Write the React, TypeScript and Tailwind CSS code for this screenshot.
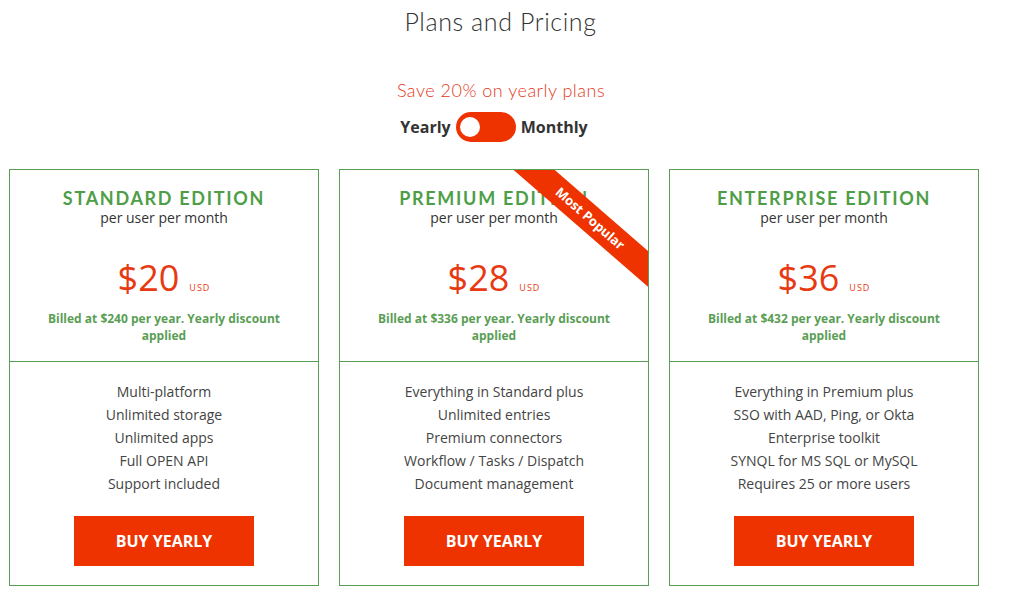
import React from "react";

type Plan = {
  name: string;
  price: number;
  billed: number;
  features: string[];
  popular?: boolean;
};

const plans: Plan[] = [
  {
    name: "Standard Edition",
    price: 20,
    billed: 240,
    features: ["Multi-platform", "Unlimited storage", "Unlimited apps", "Full OPEN API", "Support included"],
  },
  {
    name: "Premium Edition",
    price: 28,
    billed: 336,
    popular: true,
    features: [
      "Everything in Standard plus",
      "Unlimited entries",
      "Premium connectors",
      "Workflow / Tasks / Dispatch",
      "Document management",
    ],
  },
  {
    name: "Enterprise Edition",
    price: 36,
    billed: 432,
    features: [
      "Everything in Premium plus",
      "SSO with AAD, Ping, or Okta",
      "Enterprise toolkit",
      "SYNQL for MS SQL or MySQL",
      "Requires 25 or more users",
    ],
  },
];

function PlanCard({ plan }: { plan: Plan }) {
  return (
    <div className="relative overflow-hidden border border-[#5a9e55] bg-white">
      {plan.popular && (
        <div className="absolute left-[150px] top-[35px] flex h-[27px] w-[200px] rotate-[41deg] items-center justify-center bg-[#ee3300] text-[13px] font-bold text-white">
          Most Popular
        </div>
      )}
      <div className="flex flex-col items-center border-b border-[#5a9e55] pt-[18px] pb-[17px] text-center">
        <h2 className="font-['Lato',sans-serif] text-[18px] leading-[20px] font-bold tracking-[1.7px] text-[#4e9e48] uppercase">
          {plan.name}
        </h2>
        <p className="text-[14px] leading-[20px] text-[#333]">per user per month</p>
        <div className="mt-[28px] flex items-baseline gap-[10px]">
          <span className="text-[36px] leading-[44px] font-medium text-[#e83a12]">${plan.price}</span>
          <span className="text-[9px] tracking-[1px] text-[#e83a12]">USD</span>
        </div>
        <p className="mt-[10px] text-[12px] leading-[17px] font-bold text-[#5a9e55]">
          Billed at ${plan.billed} per year. Yearly discount
          <br />
          applied
        </p>
      </div>
      <div className="flex flex-col items-center pt-[18px] pb-[19px] text-center">
        <ul className="text-[14px] leading-[23px] text-[#444]">
          {plan.features.map((f) => (
            <li key={f}>{f}</li>
          ))}
        </ul>
        <button className="mt-[21px] h-[50px] w-[180px] bg-[#ee3300] text-[16px] font-bold text-white">
          BUY YEARLY
        </button>
      </div>
    </div>
  );
}

export default function App() {
  return (
    <div className="min-h-[611px] w-[1010px] bg-white font-['Open_Sans',sans-serif] text-[#333]">
      <h1 className="pt-[5px] pr-[9px] text-center font-['Lato',sans-serif] text-[25px] leading-[32px] font-light tracking-[0.6px] text-[#333]">
        Plans and Pricing
      </h1>
      <p className="mt-[40px] pr-[8px] text-center font-['Lato',sans-serif] text-[18px] leading-[26px] font-light tracking-[0.5px] text-[#e4381a]">
        Save 20% on yearly plans
      </p>
      <div className="ml-[9px] w-[970px]">
        <div className="mt-[9px] flex items-center justify-center gap-[5px] text-[16px] font-bold text-[#333]">
          <span>Yearly</span>
          <div className="flex h-[30px] w-[60px] items-center rounded-full bg-[#ee3300] px-[4px]">
            <div className="h-[20px] w-[20px] rounded-full bg-white" />
          </div>
          <span>Monthly</span>
        </div>
        <div className="mt-[27px] grid grid-cols-3 gap-[20px]">
          {plans.map((p) => (
            <PlanCard key={p.name} plan={p} />
          ))}
        </div>
      </div>
    </div>
  );
}
